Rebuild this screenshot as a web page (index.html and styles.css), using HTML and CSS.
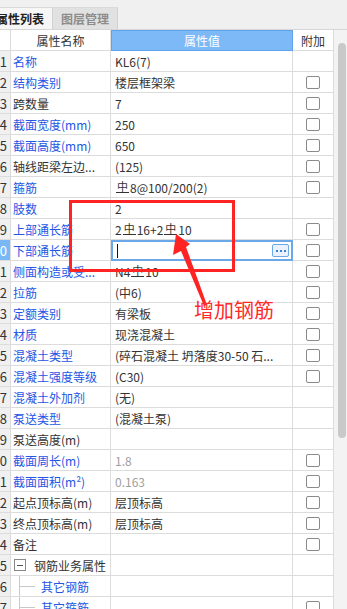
FILE: index.html
```html
<!DOCTYPE html>
<html lang="zh-CN">

<head>
    <meta charset="UTF-8">
    <meta name="viewport" content="width=device-width, initial-scale=1.0">
    <title>属性列表</title>
    <link rel="stylesheet" href="styles.css">
</head>

<body>
    <div class="panel">
        <!-- Tabs -->
        <div class="tabbar">
            <div class="tab active">属性列表</div>
            <div class="tab idle">图层管理</div>
        </div>

        <div class="sheet">
            <div class="grid">
                <div class="row head">
                    <span class="num"></span>
                    <span class="name">属性名称</span>
                    <span class="val hv">属性值</span>
                    <span class="add">附加</span>
                </div>
                <div class="row">
                    <span class="num">1</span><span class="name blue">名称</span><span class="val">KL6(7)</span><span class="add"></span>
                </div>
                <div class="row">
                    <span class="num">2</span><span class="name blue">结构类别</span><span class="val">楼层框架梁</span><span class="add"><i class="cb"></i></span>
                </div>
                <div class="row">
                    <span class="num">3</span><span class="name">跨数量</span><span class="val">7</span><span class="add"><i class="cb"></i></span>
                </div>
                <div class="row">
                    <span class="num">4</span><span class="name blue">截面宽度(mm)</span><span class="val">250</span><span class="add"><i class="cb"></i></span>
                </div>
                <div class="row">
                    <span class="num">5</span><span class="name blue">截面高度(mm)</span><span class="val">650</span><span class="add"><i class="cb"></i></span>
                </div>
                <div class="row">
                    <span class="num">6</span><span class="name">轴线距梁左边...</span><span class="val">(125)</span><span class="add"><i class="cb"></i></span>
                </div>
                <div class="row">
                    <span class="num">7</span><span class="name blue">箍筋</span><span class="val"><span class="g">中</span>8@100/200(2)</span><span class="add"><i class="cb"></i></span>
                </div>
                <div class="row">
                    <span class="num">8</span><span class="name blue">肢数</span><span class="val">2</span><span class="add"></span>
                </div>
                <div class="row">
                    <span class="num">9</span><span class="name blue">上部通长筋</span><span class="val">2<span class="g">中</span>16+2<span class="g">中</span>10</span><span class="add"><i class="cb"></i></span>
                </div>
                <div class="row">
                    <span class="num sel">10</span><span class="name blue">下部通长筋</span><span class="val edit"><i class="caret"></i><b class="more"><i></i><i></i><i></i></b></span><span class="add"><i class="cb"></i></span>
                </div>
                <div class="row">
                    <span class="num">11</span><span class="name blue">侧面构造或受...</span><span class="val">N4<span class="g">中</span>10</span><span class="add"><i class="cb"></i></span>
                </div>
                <div class="row">
                    <span class="num">12</span><span class="name blue">拉筋</span><span class="val">(中6)</span><span class="add"><i class="cb"></i></span>
                </div>
                <div class="row">
                    <span class="num">13</span><span class="name blue">定额类别</span><span class="val">有梁板</span><span class="add"><i class="cb"></i></span>
                </div>
                <div class="row">
                    <span class="num">14</span><span class="name blue">材质</span><span class="val">现浇混凝土</span><span class="add"><i class="cb"></i></span>
                </div>
                <div class="row">
                    <span class="num">15</span><span class="name blue">混凝土类型</span><span class="val">(碎石混凝土 坍落度30-50 石...</span><span class="add"><i class="cb"></i></span>
                </div>
                <div class="row">
                    <span class="num">16</span><span class="name blue">混凝土强度等级</span><span class="val">(C30)</span><span class="add"><i class="cb"></i></span>
                </div>
                <div class="row">
                    <span class="num">17</span><span class="name blue">混凝土外加剂</span><span class="val">(无)</span><span class="add"></span>
                </div>
                <div class="row">
                    <span class="num">18</span><span class="name blue">泵送类型</span><span class="val">(混凝土泵)</span><span class="add"></span>
                </div>
                <div class="row">
                    <span class="num">19</span><span class="name">泵送高度(m)</span><span class="val"></span><span class="add"></span>
                </div>
                <div class="row">
                    <span class="num">20</span><span class="name blue">截面周长(m)</span><span class="val muted">1.8</span><span class="add"><i class="cb"></i></span>
                </div>
                <div class="row">
                    <span class="num">21</span><span class="name blue">截面面积(m²)</span><span class="val muted">0.163</span><span class="add"><i class="cb"></i></span>
                </div>
                <div class="row">
                    <span class="num">22</span><span class="name">起点顶标高(m)</span><span class="val">层顶标高</span><span class="add"><i class="cb"></i></span>
                </div>
                <div class="row">
                    <span class="num">23</span><span class="name">终点顶标高(m)</span><span class="val">层顶标高</span><span class="add"><i class="cb"></i></span>
                </div>
                <div class="row">
                    <span class="num">24</span><span class="name">备注</span><span class="val"></span><span class="add"><i class="cb"></i></span>
                </div>
                <div class="row">
                    <span class="num">25</span><span class="name tree"><i class="fold"></i>钢筋业务属性</span><span class="val"></span><span class="add"></span>
                </div>
                <div class="row">
                    <span class="num">26</span><span class="name blue leaf"><i class="branch"></i>其它钢筋</span><span class="val"></span><span class="add"></span>
                </div>
                <div class="row">
                    <span class="num">27</span><span class="name blue leaf"><i class="branch"></i>其它箍筋</span><span class="val"></span><span class="add"><i class="cb"></i></span>
                </div>
            </div>

            <div class="scrollbar">
                <div class="thumb"></div>
            </div>
        </div>

        <!-- Red annotation drawn over the grid -->
        <div class="mark"></div>
        <svg class="arrow" width="347" height="609" viewBox="0 0 347 609">
            <polygon points="176,234 190,244 186,247 207,305 204,306 181,251 173,255" fill="#ff2424" />
        </svg>
        <div class="note">增加钢筋</div>
    </div>
</body>

</html>
```

FILE: styles.css
```css
body {
    margin: 0;
    font-family: "Noto Sans CJK SC", "Noto Sans", sans-serif;
    font-size: 12px;
    color: #333;
    background-color: #fff;
    overflow: hidden;
}

.panel {
    position: relative;
    width: 347px;
    height: 609px;
    overflow: hidden;
}

/* Tabs */
.tabbar {
    display: flex;
    height: 22px;
    padding-top: 7px;
    margin-left: -12px;
    background-color: #f0f0f0;
    border-bottom: 1px solid #d6d6d6;
}

.tab {
    box-sizing: border-box;
    width: 65px;
    display: flex;
    align-items: center;
    justify-content: center;
    font-weight: bold;
    border-top: 1px solid #dadada;
    border-right: 1px solid #d2d2d2;
}

.tab.active {
    background-color: #f6f6f6;
    color: #222;
}

.tab.idle {
    background-color: #e1e1e1;
    color: #8c8c8c;
}

/* Grid */
.sheet {
    display: flex;
    margin-left: -12px;
}

.grid {
    width: 346px;
}

.row {
    display: grid;
    grid-template-columns: 23px 100px 182px 41px;
    height: 21px;
}

.row > span {
    box-sizing: border-box;
    display: flex;
    align-items: center;
    white-space: nowrap;
    overflow: hidden;
    border-right: 1px solid #dcdcdc;
    border-bottom: 1px solid #dcdcdc;
}

.num {
    justify-content: flex-end;
    padding-right: 3px;
    background-color: #f0f0f0;
    font-size: 13px;
    color: #333;
}

.num.sel {
    background-color: #7ab8f5;
    color: #fff;
}

.name {
    padding-left: 2px;
}

.val {
    padding-left: 4px;
}

.add {
    justify-content: center;
}

.blue {
    color: #2456e4;
}

.muted {
    color: #a0a0a0;
}

.head > span {
    justify-content: center;
    padding: 0;
    background-color: #fff;
}

.head .hv {
    background-color: #7db9f6;
    color: #fff;
    border: 1px solid #5ea4ee;
}

.cb {
    width: 12px;
    height: 11px;
    border: 1px solid #8a8a8a;
    border-radius: 2px;
    background-color: #fff;
}

/* rebar grade symbol */
.g {
    display: inline-block;
    font-size: 11px;
    line-height: 11px;
    padding: 0 1px;
    margin: 0 1px 1px;
    border-bottom: 1px solid currentColor;
}

/* cell being edited */
.row > .edit {
    border: 2px solid #6aa8e8;
    padding-left: 4px;
}

.caret {
    width: 1px;
    height: 14px;
    background-color: #111;
}

.more {
    box-sizing: border-box;
    width: 17px;
    height: 13px;
    margin-left: auto;
    margin-right: 2px;
    display: flex;
    align-items: center;
    justify-content: center;
    gap: 2px;
    border: 1px solid #6aa8e8;
    border-radius: 2px;
    background-color: #eaf3fd;
}

.more i {
    width: 2px;
    height: 2px;
    background-color: #3a82d6;
}

/* tree rows */
.tree {
    gap: 8px;
}

.fold {
    box-sizing: border-box;
    width: 12px;
    height: 12px;
    border: 1px solid #8a8a8a;
    margin-left: 1px;
    background: linear-gradient(#555, #555) center / 6px 1px no-repeat, #fff;
}

.leaf {
    gap: 6px;
}

.branch {
    align-self: stretch;
    width: 16px;
    margin-left: 6px;
    background:
        linear-gradient(#c8c8c8, #c8c8c8) left top / 1px 100% no-repeat,
        linear-gradient(#c8c8c8, #c8c8c8) left center / 16px 1px no-repeat;
}

/* scrollbar */
.scrollbar {
    width: 13px;
    background-color: #f3f3f3;
}

.thumb {
    width: 8px;
    height: 395px;
    margin: 13px 0 0 4px;
    border-radius: 4px;
    background-color: #c9c9c9;
}

/* annotation */
.mark {
    position: absolute;
    left: 69px;
    top: 200px;
    width: 166px;
    height: 72px;
    box-sizing: border-box;
    border: 3px solid #ff2424;
}

.arrow {
    position: absolute;
    left: 0;
    top: 0;
    pointer-events: none;
}

.note {
    position: absolute;
    left: 194px;
    top: 297px;
    font-size: 20px;
    line-height: 26px;
    color: #ff2a2a;
}
```
